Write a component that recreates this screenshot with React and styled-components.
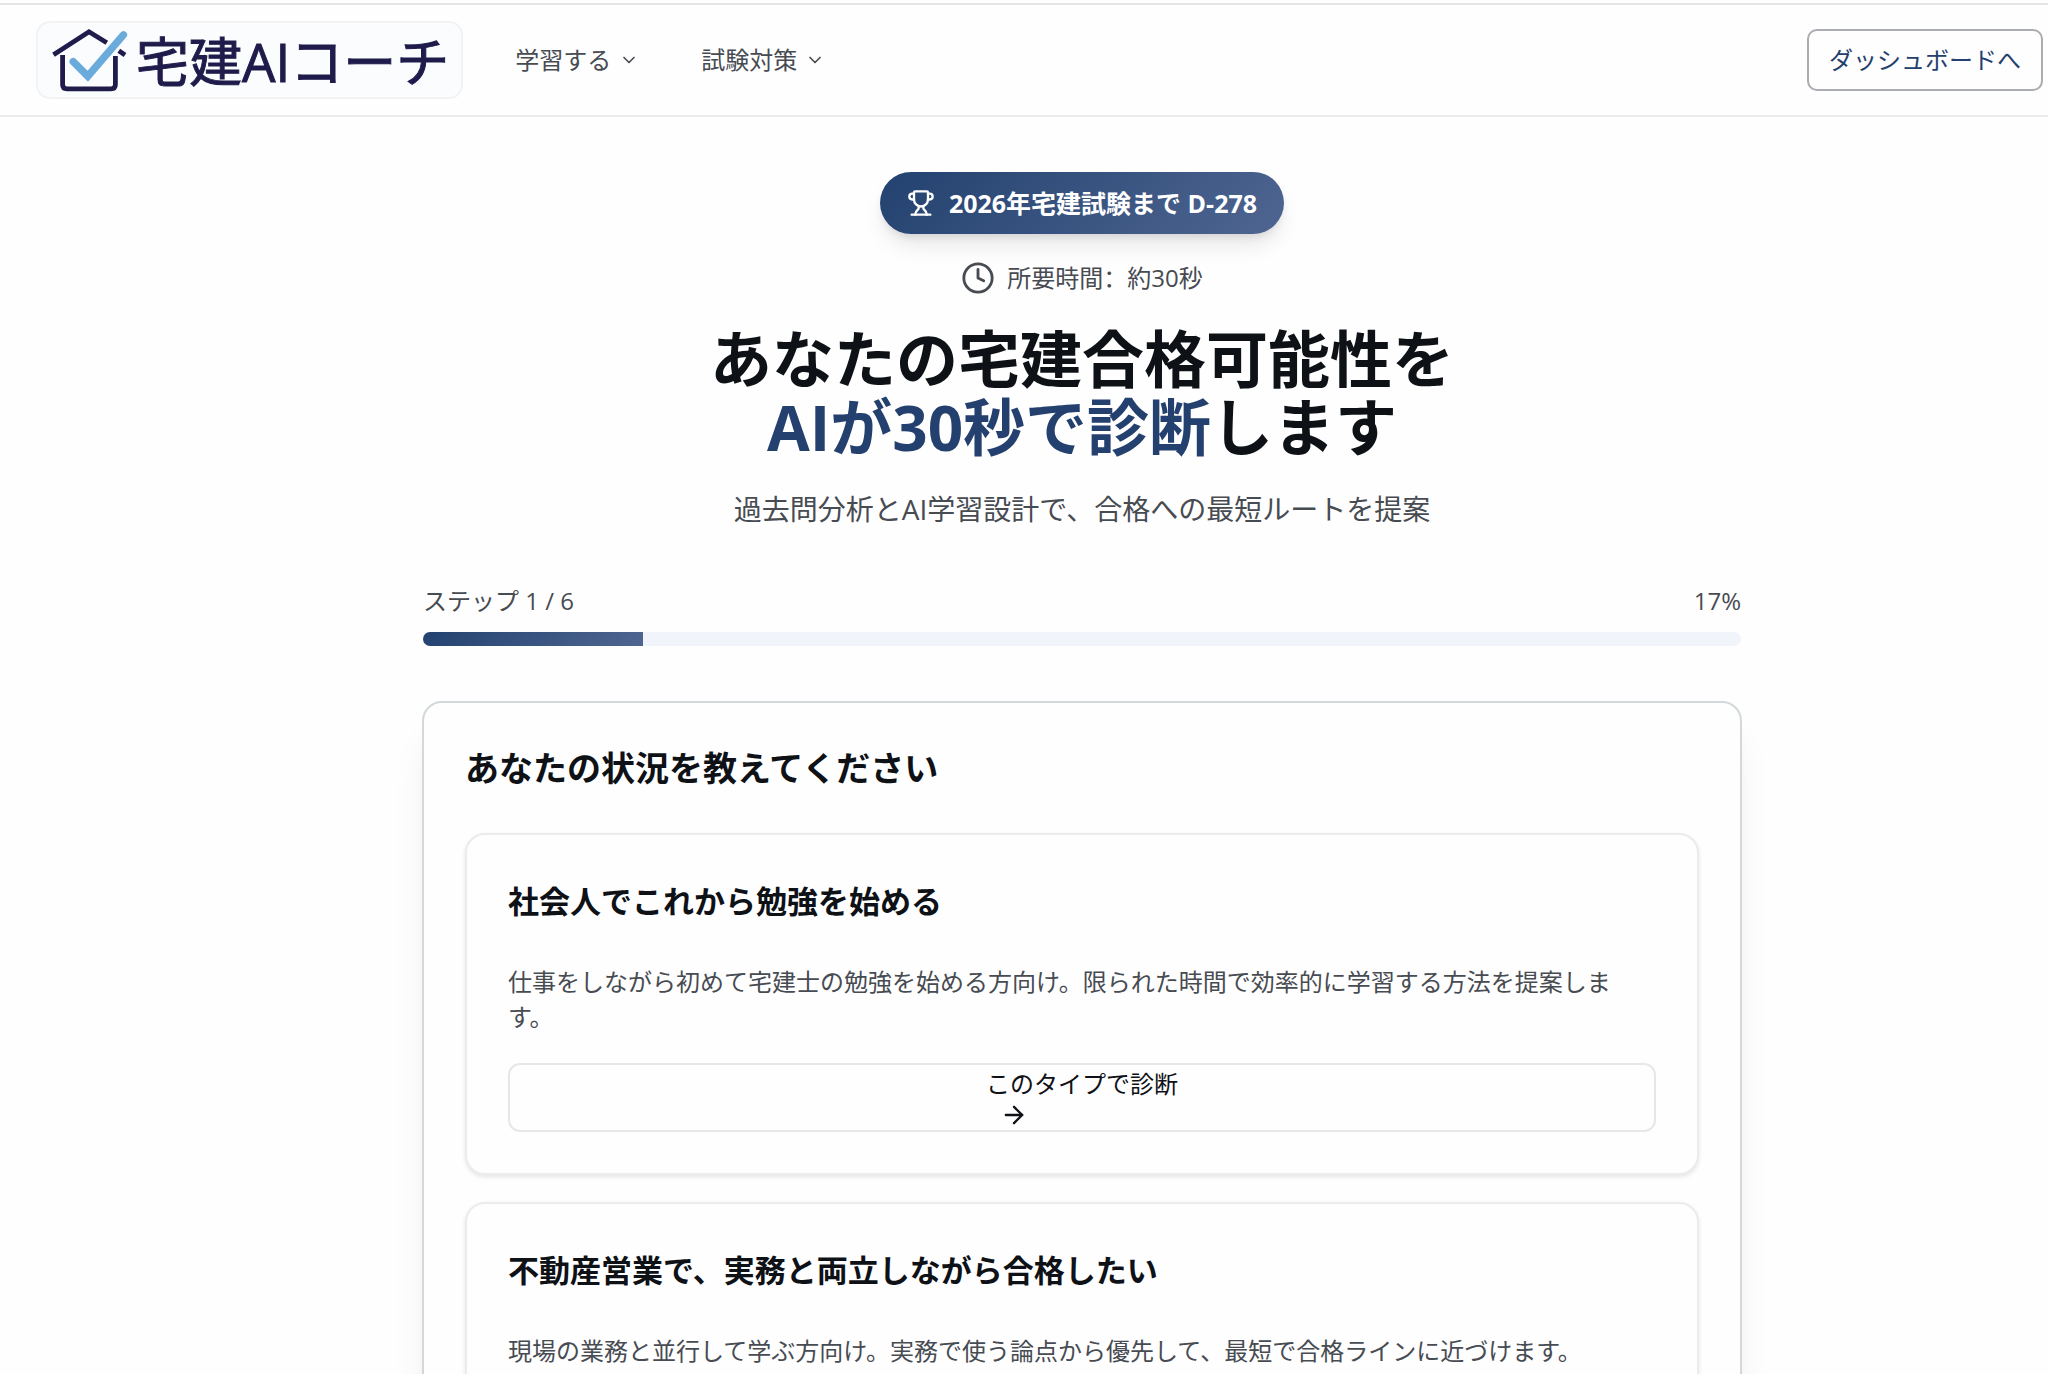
import React from "react";
import styled, { createGlobalStyle } from "styled-components";
import { ArrowRight, ChevronDown, Clock, Trophy } from "lucide-react";

const menus = ["学習する", "試験対策"];

const step = { current: 1, total: 6 };

const types = [
    {
        id: "beginner",
        title: "社会人でこれから勉強を始める",
        text: "仕事をしながら初めて宅建士の勉強を始める方向け。限られた時間で効率的に学習する方法を提案します。",
    },
    {
        id: "sales",
        title: "不動産営業で、実務と両立しながら合格したい",
        text: "現場の業務と並行して学ぶ方向け。実務で使う論点から優先して、最短で合格ラインに近づけます。",
    },
];

function LogoMark() {
    return (
        <svg width="76" height="64" viewBox="52 28 76 64" fill="none" aria-hidden="true">
            <g stroke="#1f1b4b" strokeWidth="4.8" strokeLinejoin="miter">
                <path d="M53.5 54.8 89 31.8 106.8 42.8" />
                <path d="M118.8 50.8 125 55" />
                <path d="M62.6 55V84.5Q62.6 88.8 67 88.8H111Q115.4 88.8 115.4 84.5V56" />
            </g>
            <path
                d="M73.2 61.6 87.8 76.2 123.4 34.8"
                stroke="#6aabdc"
                strokeWidth="7.4"
                strokeLinecap="round"
            />
        </svg>
    );
}

function Header() {
    return (
        <Bar>
            <Logo href="#">
                <LogoMark />
                <LogoText>宅建AIコーチ</LogoText>
            </Logo>
            <Nav>
                {menus.map((menu) => (
                    <MenuButton key={menu} type="button">
                        {menu}
                        <ChevronDown size={20} />
                    </MenuButton>
                ))}
            </Nav>
            <DashboardLink href="#">ダッシュボードへ</DashboardLink>
        </Bar>
    );
}

function TypeCard({ title, text }) {
    return (
        <Type>
            <TypeTitle>{title}</TypeTitle>
            <TypeText>{text}</TypeText>
            <TypeButton type="button">
                <span>
                    このタイプで診断
                    <ArrowRight size={28} />
                </span>
            </TypeButton>
        </Type>
    );
}

function App() {
    const ratio = (step.current / step.total) * 100;

    return (
        <>
            <GlobalStyle />
            <Header />
            <Main>
                <Badge>
                    <Trophy size={28} />
                    2026年宅建試験まで D-278
                </Badge>
                <Duration>
                    <Clock size={34} />
                    <span>
                        所要時間<Colon>：</Colon>約30秒
                    </span>
                </Duration>
                <Title>
                    あなたの宅建合格可能性を
                    <br />
                    <em>AIが30秒で診断</em>します
                </Title>
                <Lead>過去問分析とAI学習設計で、合格への最短ルートを提案</Lead>
                <Progress>
                    <ProgressLabels>
                        <span>
                            ステップ {step.current} / {step.total}
                        </span>
                        <span>{Math.round(ratio)}%</span>
                    </ProgressLabels>
                    <Track>
                        <Fill style={{ width: `${ratio}%` }} />
                    </Track>
                </Progress>
                <Card>
                    <CardTitle>あなたの状況を教えてください</CardTitle>
                    <TypeList>
                        {types.map((type) => (
                            <TypeCard key={type.id} title={type.title} text={type.text} />
                        ))}
                    </TypeList>
                </Card>
            </Main>
        </>
    );
}

const GlobalStyle = createGlobalStyle`
    * {
        box-sizing: border-box;
    }

    body {
        height: 100vh;
        margin: 0;
        overflow: hidden;
        background: #fefefe;
        color: #0e1116;
        font-family: "Open Sans", "Noto Sans CJK JP", sans-serif;
        font-size: 24px;
    }

    h1, h2, h3, p {
        margin: 0;
    }

    button {
        font: inherit;
        cursor: pointer;
    }
`;

const Bar = styled.header`
    display: flex;
    align-items: center;
    height: 114px;
    margin-top: 3px;
    padding: 0 5px 0 36px;
    border-top: 2px solid #e4e4e5;
    border-bottom: 2px solid #ececed;
`;

const Logo = styled.a`
    display: flex;
    align-items: center;
    gap: 8px;
    height: 78px;
    padding: 0 12px 0 14px;
    border: 2px solid #f1f3f5;
    border-radius: 14px;
    background: #fafcfe;
    color: #1f1b4b;
    text-decoration: none;
`;

const LogoText = styled.span`
    padding-top: 4px;
    font-size: 53px;
    line-height: 70px;
    white-space: nowrap;
    -webkit-text-stroke: 1px #1f1b4b;
`;

const Nav = styled.nav`
    display: flex;
    gap: 62px;
    margin-left: 52px;
`;

const MenuButton = styled.button`
    display: flex;
    align-items: center;
    gap: 8px;
    padding: 0;
    border: 0;
    background: none;
    color: #474b52;
    line-height: 34px;
`;

const DashboardLink = styled.a`
    margin-left: auto;
    padding: 12px 20px;
    border: 2px solid #a9acb1;
    border-radius: 10px;
    color: #24406f;
    line-height: 34px;
    text-decoration: none;
`;

const Main = styled.main`
    display: flex;
    flex-direction: column;
    align-items: center;
    padding: 55px 0 55px 116px;
`;

const Badge = styled.div`
    display: flex;
    align-items: center;
    gap: 14px;
    height: 62px;
    padding: 0 27px;
    border-radius: 31px;
    background: linear-gradient(135deg, #23426f, #4f6591);
    box-shadow: 0 14px 22px -4px rgba(0, 0, 0, 0.1), 0 5px 8px -3px rgba(0, 0, 0, 0.1);
    color: #fff;
    font-size: 25px;
    font-weight: 700;
    line-height: 34px;
`;

const Duration = styled.div`
    display: flex;
    align-items: center;
    gap: 12px;
    margin-top: 27px;
    color: #474b52;
    line-height: 34px;
`;

const Colon = styled.span`
    font-family: "Noto Sans CJK SC", sans-serif;
    line-height: 1;
`;

const Title = styled.h1`
    margin-top: 30px;
    font-size: 62px;
    font-weight: 700;
    line-height: 68px;
    text-align: center;

    em {
        color: #24406f;
        font-style: normal;
    }
`;

const Lead = styled.p`
    margin-top: 24px;
    color: #474b52;
    font-size: 28px;
    line-height: 48px;
`;

const Progress = styled.div`
    width: 100%;
    max-width: 1318px;
    margin-top: 51px;
`;

const ProgressLabels = styled.div`
    display: flex;
    justify-content: space-between;
    color: #474b52;
    line-height: 34px;
`;

const Track = styled.div`
    height: 14px;
    margin-top: 14px;
    border-radius: 7px;
    background: #f2f4fb;
    overflow: hidden;
`;

const Fill = styled.div`
    height: 100%;
    background: linear-gradient(135deg, #23426f, #4f6591);
`;

const Card = styled.section`
    width: 100%;
    max-width: 1320px;
    margin-top: 55px;
    padding: 41px;
    border: 2px solid #d3d8da;
    border-radius: 20px;
    box-shadow: 0 34px 42px -8px rgba(0, 0, 0, 0.07), 0 14px 18px -10px rgba(0, 0, 0, 0.07);
`;

const CardTitle = styled.h2`
    font-size: 34px;
    font-weight: 700;
    line-height: 48px;
`;

const TypeList = styled.div`
    display: grid;
    gap: 27px;
    margin-top: 41px;
`;

const Type = styled.article`
    padding: 41px;
    border: 2px solid #ececed;
    border-radius: 20px;
    background: #fefefe;
    box-shadow: 0 2px 4px rgba(0, 0, 0, 0.1);
`;

const TypeTitle = styled.h3`
    font-size: 31px;
    font-weight: 700;
    line-height: 50px;
`;

const TypeText = styled.p`
    margin-top: 38px;
    color: #474b52;
    line-height: 35px;
`;

const TypeButton = styled.button`
    display: flex;
    justify-content: center;
    align-items: center;
    width: 100%;
    height: 69px;
    margin-top: 29px;
    padding: 0;
    border: 2px solid #e6e7e8;
    border-radius: 12px;
    background: #fefefe;
    color: #0e1116;
    line-height: 34px;
    text-align: left;

    svg {
        display: block;
        margin-left: 14px;
    }
`;

export default App;
